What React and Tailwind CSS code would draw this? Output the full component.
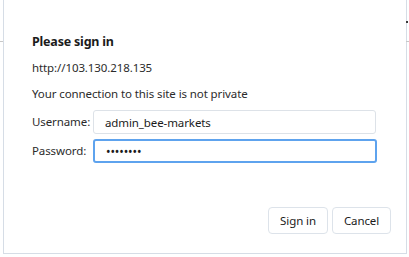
import React from 'react';

const SignInDialog = () => {
    return (
        <div className="w-[409px] h-[257px] bg-white relative overflow-hidden font-['Segoe_UI','Noto_Sans',sans-serif]">
            {/* bits of the browser showing at the edges */}
            <span className="absolute left-0 top-[41px] w-[3px] h-px bg-[#c8c8c8]" />
            <span className="absolute right-0 top-[41px] w-[3px] h-px bg-[#c8c8c8]" />
            <span className="absolute right-[1px] top-[21px] w-[2px] h-[2px] bg-[#3a3a3a]" />

            <div className="ml-[3px] w-[404px] h-[254px] border-x border-b border-[#d6dde6] bg-white flex flex-col pl-[28px] pr-[15px] pt-[33px] pb-[19px] text-[11.5px] tracking-[-0.1px]">
                <h1 className="text-[12.5px] leading-[18px] font-bold tracking-[-0.2px] text-[#1b1b1b]">Please sign in</h1>
                <p className="mt-[8px] leading-[18px] text-[#2b2b2b]">http://103.130.218.135</p>
                <p className="mt-[8px] leading-[18px] text-[#2b2b2b]">Your connection to this site is not private</p>

                <div className="mt-[7px] flex flex-col gap-[5px]">
                    <div className="flex items-center">
                        <label className="w-[61px] text-[#2b2b2b]">Username:</label>
                        <input
                            className="w-[283px] h-[24px] px-[11px] text-[11.5px] tracking-[-0.1px] text-[#1b1b1b] border border-[#dde2e8] rounded-[3px] outline-none"
                            defaultValue="admin_bee-markets"
                        />
                    </div>
                    <div className="flex items-center">
                        <label className="w-[61px] text-[#2b2b2b]">Password:</label>
                        <input
                            type="password"
                            className="w-[284px] h-[24px] px-[11px] text-[12px] text-[#1b1b1b] border-2 border-[#5ea3ee] rounded-[3px] outline-none"
                            defaultValue="12345678"
                        />
                    </div>
                </div>

                <div className="mt-auto flex justify-end gap-[4px]">
                    <button className="w-[60px] h-[27px] text-[#1b1b1b] border border-[#dde3ea] rounded-[4px] bg-white">Sign in</button>
                    <button className="w-[59px] h-[27px] text-[#1b1b1b] border border-[#dde3ea] rounded-[4px] bg-white">Cancel</button>
                </div>
            </div>
        </div>
    );
};

export default function App() {
    return <SignInDialog />;
}
